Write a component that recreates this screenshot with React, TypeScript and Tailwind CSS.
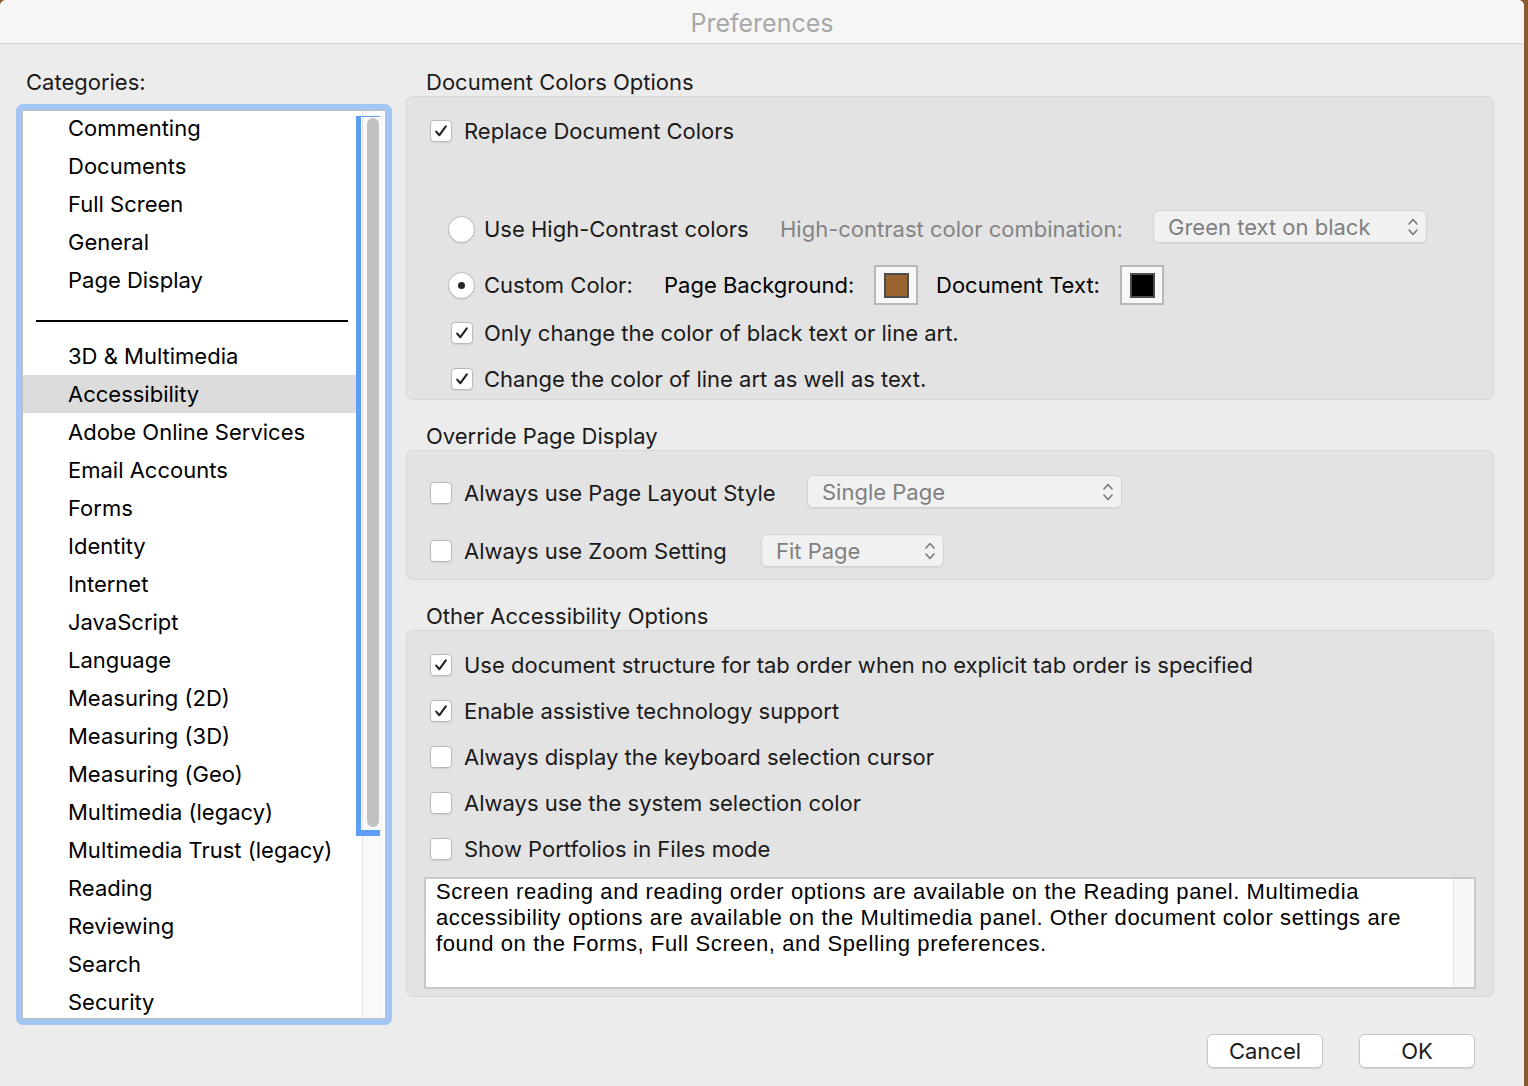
import { FC } from 'react'

const ui = "font-['Inter','Liberation_Sans',sans-serif]"

const categoriesTop = ['Commenting', 'Documents', 'Full Screen', 'General', 'Page Display']
const categoriesRest = [
  '3D & Multimedia',
  'Accessibility',
  'Adobe Online Services',
  'Email Accounts',
  'Forms',
  'Identity',
  'Internet',
  'JavaScript',
  'Language',
  'Measuring (2D)',
  'Measuring (3D)',
  'Measuring (Geo)',
  'Multimedia (legacy)',
  'Multimedia Trust (legacy)',
  'Reading',
  'Reviewing',
  'Search',
  'Security'
]

const Check = () => (
  <svg width="16" height="16" viewBox="0 0 16 16">
    <path
      d="M3.2 8.6l3.2 3.6L12.8 3.4"
      fill="none"
      stroke="#222222"
      strokeWidth="2.1"
      strokeLinecap="round"
      strokeLinejoin="round"
    />
  </svg>
)

const Checkbox: FC<{ checked?: boolean }> = ({ checked }) => (
  <span className="flex h-[22px] w-[22px] shrink-0 items-center justify-center rounded-[4px] border border-[#bababa] bg-white shadow-[0_1px_1px_rgba(0,0,0,0.08)]">
    {checked ? <Check /> : null}
  </span>
)

const Radio: FC<{ checked?: boolean }> = ({ checked }) => (
  <span className="flex h-[27px] w-[27px] shrink-0 items-center justify-center rounded-full border border-[#bababa] bg-white shadow-[0_1px_1px_rgba(0,0,0,0.08)]">
    {checked ? <span className="h-[7px] w-[7px] rounded-full bg-[#262626]" /> : null}
  </span>
)

const Chevrons = () => (
  <svg width="12" height="22" viewBox="0 0 12 22">
    <path d="M2 8l4-4.5 4 4.5" fill="none" stroke="#7a7a7a" strokeWidth="1.6" strokeLinecap="round" strokeLinejoin="round" />
    <path d="M2 14l4 4.5 4-4.5" fill="none" stroke="#7a7a7a" strokeWidth="1.6" strokeLinecap="round" strokeLinejoin="round" />
  </svg>
)

type SelectProps = {
  label: string
  width: string
}
const Select: FC<SelectProps> = ({ label, width }) => (
  <div
    className={`flex h-[33px] shrink-0 items-center justify-between rounded-[6px] border border-[#d3d3d3] bg-[#f1f1f1] pl-[14px] pr-[7px] text-[#7f7f7f] shadow-[0_1px_1px_rgba(0,0,0,0.06)] ${width}`}>
    <span>{label}</span>
    <Chevrons />
  </div>
)

const Swatch: FC<{ color: string }> = ({ color }) => (
  <span className="flex h-[40px] w-[44px] shrink-0 items-center justify-center border-2 border-[#b8b8b8] bg-[#f7f7f7]">
    <span className={`h-[25px] w-[25px] border-2 border-[#4d4d4d] ${color}`} />
  </span>
)

const Heading: FC<{ text: string }> = ({ text }) => (
  <div className="flex h-[50px] items-end pb-[2px] pl-[20px]">
    <span className="leading-[24px]">{text}</span>
  </div>
)

const Group: FC<{ className: string; children: React.ReactNode }> = ({ className, children }) => (
  <div className={`rounded-[7px] border border-[#d6d6d6] bg-[#e3e3e3] ${className}`}>{children}</div>
)

const CategoryRow: FC<{ name: string; selected?: boolean }> = ({ name, selected }) => (
  <div className={`flex h-[38px] items-center pl-[45px] ${selected ? 'bg-[#dcdcdc]' : ''}`}>
    <span className="whitespace-nowrap">{name}</span>
  </div>
)

const App = () => {
  return (
    <div className={`flex h-[1086px] w-[1528px] overflow-hidden bg-[#8a5a2c] text-[22px] leading-[24px] text-[#1a1a1a] ${ui}`}>
      <div className="flex h-full w-[1524px] flex-col overflow-hidden rounded-t-[6px] bg-[#ececec]">
        {/* title bar */}
        <div className="flex h-[44px] shrink-0 items-center justify-center border-b border-[#d1d1d1] bg-[#f6f6f6] pt-[2px]">
          <span className="text-[25px] text-[#a8a8a8]">Preferences</span>
        </div>

        <div className="flex flex-1 pl-[16px]">
          {/* categories */}
          <div className="flex w-[376px] shrink-0 flex-col pt-[26px]">
            <div className="pl-[10px] leading-[24px]">Categories:</div>
            <div className="mt-[10px] rounded-[7px] bg-[#a2c5f3] p-[6px]">
              <div className="relative flex h-[909px] overflow-hidden border border-[#bdbdbd] bg-white">
                <div className="-mt-[2px] w-[333px] shrink-0 text-black">
                  {categoriesTop.map((c) => (
                    <CategoryRow key={c} name={c} />
                  ))}
                  <div className="flex h-[38px] items-center pl-[13px] pt-[5px]">
                    <div className="h-[2px] w-[312px] bg-black" />
                  </div>
                  {categoriesRest.map((c) => (
                    <CategoryRow key={c} name={c} selected={c === 'Accessibility'} />
                  ))}
                </div>
                <div className="w-[6px] shrink-0" />
                <div className="w-[21px] shrink-0 border-l border-[#e3e3e3] bg-[#f9f9f9] pl-[4px] pt-[7px]">
                  <div className="h-[709px] w-[12px] rounded-full bg-[#c2c2c2]" />
                </div>
                <div className="absolute left-[333px] top-[5px] h-[720px] w-[24px] border-b-[6px] border-l-[5px] border-t border-[#5c9df6]" />
              </div>
            </div>
          </div>

          {/* options */}
          <div className="ml-[14px] flex w-[1088px] shrink-0 flex-col pt-[2px]">
            <Heading text="Document Colors Options" />
            <Group className="h-[304px] pt-[14px]">
              <div className="flex h-[40px] items-center pl-[23px]">
                <Checkbox checked />
                <span className="ml-[12px]">Replace Document Colors</span>
              </div>
              <div className="mt-[58px] flex h-[40px] items-center pl-[41px]">
                <Radio />
                <span className="ml-[9px] w-[296px] whitespace-nowrap">Use High-Contrast colors</span>
                <span className="w-[373px] whitespace-nowrap text-[#838383]">High-contrast color combination:</span>
                <div className="mb-[5px]">
                  <Select label="Green text on black" width="w-[274px]" />
                </div>
              </div>
              <div className="mt-[16px] flex h-[40px] items-center pl-[41px]">
                <Radio checked />
                <span className="ml-[9px] w-[180px] whitespace-nowrap">Custom Color:</span>
                <span className="w-[210px] whitespace-nowrap text-black">Page Background:</span>
                <Swatch color="bg-[#9a6330]" />
                <span className="ml-[18px] w-[184px] whitespace-nowrap text-black">Document Text:</span>
                <Swatch color="bg-black" />
              </div>
              <div className="mt-[8px] flex h-[40px] items-center pl-[44px]">
                <Checkbox checked />
                <span className="ml-[11px]">Only change the color of black text or line art.</span>
              </div>
              <div className="mt-[6px] flex h-[40px] items-center pl-[44px]">
                <Checkbox checked />
                <span className="ml-[11px]">Change the color of line art as well as text.</span>
              </div>
            </Group>

            <Heading text="Override Page Display" />
            <Group className="h-[130px] pt-[22px]">
              <div className="flex h-[40px] items-center pl-[23px]">
                <Checkbox />
                <span className="ml-[12px] w-[343px] whitespace-nowrap">Always use Page Layout Style</span>
                <div className="mb-[3px]">
                  <Select label="Single Page" width="w-[315px]" />
                </div>
              </div>
              <div className="mt-[18px] flex h-[40px] items-center pl-[23px]">
                <Checkbox />
                <span className="ml-[12px] w-[297px] whitespace-nowrap">Always use Zoom Setting</span>
                <div className="mb-[1px]">
                  <Select label="Fit Page" width="w-[183px]" />
                </div>
              </div>
            </Group>

            <Heading text="Other Accessibility Options" />
            <Group className="h-[367px] pt-[14px]">
              <div className="flex flex-col gap-[6px] pl-[23px]">
                <div className="flex h-[40px] items-center">
                  <Checkbox checked />
                  <span className="ml-[12px]">Use document structure for tab order when no explicit tab order is specified</span>
                </div>
                <div className="flex h-[40px] items-center">
                  <Checkbox checked />
                  <span className="ml-[12px]">Enable assistive technology support</span>
                </div>
                <div className="flex h-[40px] items-center">
                  <Checkbox />
                  <span className="ml-[12px]">Always display the keyboard selection cursor</span>
                </div>
                <div className="flex h-[40px] items-center">
                  <Checkbox />
                  <span className="ml-[12px]">Always use the system selection color</span>
                </div>
                <div className="flex h-[40px] items-center">
                  <Checkbox />
                  <span className="ml-[12px]">Show Portfolios in Files mode</span>
                </div>
              </div>
              <div className="ml-[17px] mt-[8px] flex h-[112px] w-[1052px] border-2 border-[#c9c9c9] bg-white">
                <div className="flex-1 whitespace-nowrap pl-[10px] pt-0 font-['Liberation_Sans',Arial,sans-serif] text-[22px] leading-[26px] tracking-[0.6px] text-black">
                  Screen reading and reading order options are available on the Reading panel. Multimedia
                  <br />
                  accessibility options are available on the Multimedia panel. Other document color settings are
                  <br />
                  found on the Forms, Full Screen, and Spelling preferences.
                </div>
                <div className="w-[21px] shrink-0 border-l border-[#e6e6e6] bg-[#f8f8f8]" />
              </div>
            </Group>

            <div className="mt-[37px] flex justify-end gap-[36px] pr-[19px]">
              <button className="h-[34px] w-[116px] rounded-[6px] border border-[#c6c6c6] bg-white text-[22px] text-[#1a1a1a] shadow-[0_1px_1px_rgba(0,0,0,0.12)]">
                Cancel
              </button>
              <button className="h-[34px] w-[116px] rounded-[6px] border border-[#c6c6c6] bg-white text-[22px] text-[#1a1a1a] shadow-[0_1px_1px_rgba(0,0,0,0.12)]">
                OK
              </button>
            </div>
          </div>
        </div>
      </div>
    </div>
  )
}

export default App
